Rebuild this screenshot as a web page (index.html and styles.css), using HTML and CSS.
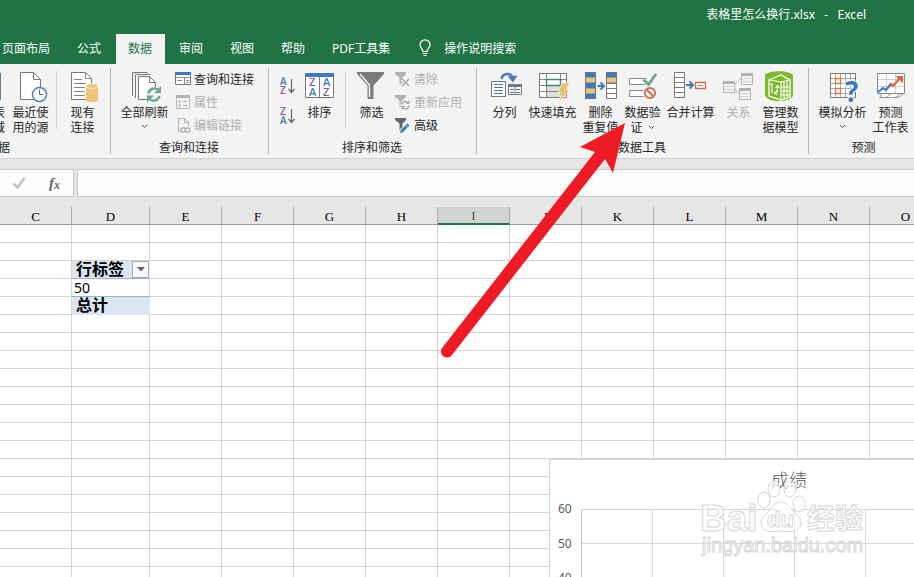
FILE: index.html
```html
<!DOCTYPE html>
<html lang="zh-CN">
<head>
<meta charset="utf-8">
<title>表格里怎么换行.xlsx - Excel</title>
<link rel="stylesheet" href="styles.css">
</head>
<body>
<header class="titlebar">
  <div class="doc-title">表格里怎么换行.xlsx&nbsp;&nbsp; -&nbsp;&nbsp; Excel</div>
  <nav class="tabs">
    <a class="tab tab-first" href="#">页面布局</a>
    <a class="tab" href="#">公式</a>
    <a class="tab active" href="#">数据</a>
    <a class="tab" href="#">审阅</a>
    <a class="tab" href="#">视图</a>
    <a class="tab" href="#">帮助</a>
    <a class="tab" href="#">PDF工具集</a>
    <a class="tab tell-me" href="#">
      <svg class="bulb" width="12" height="18" viewBox="0 0 12 18" fill="none" stroke="#fff" stroke-width="1.2"><path d="M4 12.5C4 10 1 9 1 5.8a5 5 0 0 1 10 0C11 9 8 10 8 12.5zM3.5 14.5h5M4.5 16.5h3"/></svg>
      操作说明搜索</a>
  </nav>
</header>

<main>
<div class="ribbon">
  <section class="group group-get">
    <div class="tools">
      <button class="big sliver"><svg width="2" height="34" viewBox="0 0 2 34"><path d="M0 2h1v4H0z" fill="#3d7ab8"/><path d="M.5 6v23" stroke="#777"/></svg><span>表<br>域</span></button>
      <button class="big"><svg width="37" height="34" viewBox="0 0 37 34"><path d="M8.500 1.500h13l7 7v20h-20z" fill="#fff" stroke="#777"/><path d="M21.500 1.500v7h7" fill="none" stroke="#777"/><circle cx="27.500" cy="23.500" r="7" fill="#fff" stroke="#4a7fb9" stroke-width="1.500"/><path d="M27.500 18.500v5h4" fill="none" stroke="#666"/></svg><span>最近使<br>用的源</span></button>
      <i class="rule"></i>
      <button class="big"><svg width="37" height="34" viewBox="0 0 37 34"><path d="M7.500 1.500h14l6 6v21h-20z" fill="#fff" stroke="#777"/><path d="M21.500 1.500v6h6M10 8.500h8M10 12.500h12M10 16.500h11M10 20.500h11M10 24.500h11" fill="none" stroke="#888"/><path d="M22 15v14c0 3 12 3 12 0V15z" fill="#edc67c"/><ellipse cx="28" cy="15" rx="6" ry="2.500" fill="#edc67c" stroke="#fff" stroke-width=".7"/></svg><span>现有<br>连接</span></button>
    </div>
    <h2 class="edge-label">据</h2>
  </section>

  <section class="group group-query">
    <div class="tools">
      <button class="big wide"><svg width="37" height="34" viewBox="0 0 37 34"><path d="M6.500 25V1.500h15M9.500 27V3.500h15" fill="none" stroke="#777"/><path d="M12.500 5.500h11l6 6v17h-17z" fill="#fff" stroke="#777"/><path d="M23.500 5.500v6h6" fill="none" stroke="#777"/><circle cx="28" cy="23.500" r="8" fill="#f3f3f3"/><path d="M22.500 22.500a6 6 0 0 1 10-3.500M33.500 25a6 6 0 0 1-10 3" fill="none" stroke="#6fa58f" stroke-width="2.400"/><path d="M35 15v7h-7zM21 31.500v-7h7z" fill="#6fa58f"/></svg><span>全部刷新</span><svg class="chevron" width="7" height="15" viewBox="0 0 7 15"><path d="M1 5l2.500 2.500L6 5" fill="none" stroke="#555"/></svg></button>
      <div class="stack">
        <button class="small"><svg width="16" height="16" viewBox="0 0 16 16"><path d="M.5 1.500h15v12H.5z" fill="#fff" stroke="#777"/><path d="M0 1h16v3H0z" fill="#3d7ab8"/><path d="M1 6.500h14M2 9.500h5M9.500 7v6M11 9.500h3M11 11.500h3" stroke="#888"/></svg>查询和连接</button>
        <button class="small" disabled><svg width="16" height="16" viewBox="0 0 16 16"><path d="M1.500 1.500h13v13h-13z" fill="#f5f2f6" stroke="#b8b4b8"/><path d="M1 1h14v3H1z" fill="#b5b1b6"/><circle cx="4.500" cy="7.500" r="1" fill="none" stroke="#aaa"/><circle cx="4.500" cy="11.500" r="1" fill="none" stroke="#aaa"/><path d="M8 7.500h4M8 11.500h4" stroke="#aaa"/></svg>属性</button>
        <button class="small" disabled><svg width="16" height="16" viewBox="0 0 16 16" fill="none" stroke="#b4b1b5"><path d="M5 14.500H3.500v-13h6l4 4V9M9.500 1.500v4h4"/><ellipse cx="8" cy="13" rx="2.500" ry="2" stroke-width="1.300"/><ellipse cx="12.500" cy="13" rx="2.500" ry="2" stroke-width="1.300"/></svg>编辑链接</button>
      </div>
    </div>
    <h2>查询和连接</h2>
  </section>

  <section class="group group-sort">
    <div class="tools">
      <div class="sort-pair">
        <button class="mini" aria-label="升序"><svg width="16" height="20" viewBox="0 0 16 20"><text class="glyph blue" x="0" y="9">A</text><text class="glyph purple" x="0" y="18">Z</text><path d="M11.500 3v13M8.500 13l3 3.500 3-3.500" fill="none" stroke="#666" stroke-width="1.200"/></svg></button>
        <button class="mini" aria-label="降序"><svg width="16" height="20" viewBox="0 0 16 20"><text class="glyph purple" x="0" y="9">Z</text><text class="glyph blue" x="0" y="18">A</text><path d="M11.500 3v13M8.500 13l3 3.500 3-3.500" fill="none" stroke="#666" stroke-width="1.200"/></svg></button>
      </div>
      <button class="big"><svg width="37" height="34" viewBox="0 0 37 34"><path d="M4.500 2.500h28v24h-28z" fill="#fff" stroke="#777"/><path d="M4 2h29v4H4z" fill="#3d7ab8"/><path d="M18.500 6v20" stroke="#777"/><g class="sort-letters"><text class="purple" x="8" y="15">Z</text><text class="blue" x="8" y="25">A</text><text class="blue" x="22" y="15">A</text><text class="purple" x="22" y="25">Z</text></g></svg><span>排序</span></button>
      <i class="rule"></i>
      <button class="big"><svg width="37" height="34" viewBox="0 0 37 34"><path d="M4 1h27v2L20.500 14.500V28h-6V14.500L4 3z" fill="#7b7b7b"/><path d="M7 3l9.500 11v12" fill="none" stroke="#fff" stroke-width="1.300"/></svg><span>筛选</span></button>
      <div class="stack">
        <button class="small" disabled><svg width="16" height="16" viewBox="0 0 16 16"><path d="M0 1h11v2L7.500 6.500V13h-3V6.500L0 3z" fill="#b4b1b5"/><path d="M7 8l7 7M14 8l-7 7" stroke="#f3f3f3" stroke-width="4"/><path d="M7 8l7 7M14 8l-7 7" stroke="#aaa" stroke-width="1.600"/></svg>清除</button>
        <button class="small" disabled><svg width="16" height="16" viewBox="0 0 16 16"><path d="M0 1h11v2L7.500 6.500V13h-3V6.500L0 3z" fill="#b4b1b5"/><circle cx="10.500" cy="11" r="5" fill="#f3f3f3"/><path d="M7 10.500a3.600 3.600 0 0 1 6-2M14 11.500a3.600 3.600 0 0 1-6 2.500" fill="none" stroke="#aaa" stroke-width="1.500"/><path d="M14.500 6v4h-4zM6.500 16v-4h4z" fill="#aaa"/></svg>重新应用</button>
        <button class="small"><svg width="16" height="16" viewBox="0 0 16 16"><path d="M0 1h11v2L7.500 6.500V13h-3V6.500L0 3z" fill="#666"/><path d="M6 15l8-8" stroke="#f3f3f3" stroke-width="5"/><path d="M7 14l6.500-6.500" stroke="#3d7ab8" stroke-width="3"/><path d="M5 16l.8-3.200 2.400 2.400z" fill="#3d7ab8"/><path d="M11 8.500l2 2" stroke="#fff" stroke-width=".7"/></svg>高级</button>
      </div>
    </div>
    <h2>排序和筛选</h2>
  </section>

  <section class="group group-data">
    <div class="tools">
      <button class="big"><svg width="37" height="34" viewBox="0 0 37 34"><path d="M5.500 10.500h14v15h-14zM22.500 13.500h13v10h-13z" fill="#fff" stroke="#777"/><path d="M22 13h14v3H22z" fill="#777"/><path d="M8 13.500h9M8 16.500h9M8 19.500h9M8 22.500h9M24 18.500h4M30 18.500h4M24 21.500h4M30 21.500h4" stroke="#3d7ab8"/><path d="M29 16v7" stroke="#777"/><path d="M15.500 8c1-6 9.500-7 11-1" fill="none" stroke="#4a80b8" stroke-width="2.500"/><path d="M21.500 5.500l5.500 6 4.500-7z" fill="#4a80b8"/></svg><span>分列</span></button>
      <button class="big wide"><svg width="37" height="34" viewBox="0 0 37 34"><path d="M5.500 2.500h27v24h-27z" fill="#fff" stroke="#777"/><path d="M12 15h14v11H12z" fill="#dedede"/><path d="M6 8.500h26M6 14.500h26M6 20.500h26M12.500 3v23M26.500 3v23" stroke="#888"/><path d="M12.500 8.500h14v6h-14z" fill="#fff" stroke="#3e8a6b" stroke-width="1.400"/><path d="M28 12h8l-4 7h4L24.500 31.500l3-9.500h-4z" fill="#edc172" stroke="#f3f3f3" stroke-width=".8"/></svg><span>快速填充</span></button>
      <button class="big"><svg width="37" height="34" viewBox="0 0 37 34"><path d="M3 1h11v27H3zM24 1h11v11H24z" fill="#3d7ab8"/><path d="M24 12h11v16H24z" fill="#fff"/><path d="M3 6.500h11v5H3zM3 17.500h11v5H3zM24 6.500h11v5H24z" fill="#edc67c"/><path d="M3.500 1.500h10v26h-10zM24.500 1.500h10v26h-10zM24 12.500h11M24 17.500h11M24 22.500h11" fill="none" stroke="#777"/><path d="M15.500 15h6M18.500 11.500L22 15l-3.500 3.500" fill="none" stroke="#3d7ab8" stroke-width="2"/></svg><span>删除<br>重复值</span></button>
      <button class="big"><svg width="37" height="34" viewBox="0 0 37 34"><path d="M5.500 7.500h17v6h-17zM5.500 19.500h17v6h-17z" fill="#fff" stroke="#888"/><path d="M20 9l4.500 4.500L32 3" fill="none" stroke="#f3f3f3" stroke-width="5"/><path d="M19.500 8.500l5 5L32 3" fill="none" stroke="#6fa58f" stroke-width="2.800"/><circle cx="26" cy="22" r="7" fill="#f3f3f3"/><circle cx="26" cy="22" r="5" fill="#fff" stroke="#d46a4b" stroke-width="2"/><path d="M22.500 18.500l7 7" stroke="#d46a4b" stroke-width="2"/></svg><span>数据验<br>证 <svg class="chevron inline" width="7" height="6" viewBox="0 0 7 6"><path d="M1 1l2.500 2.500L6 1" fill="none" stroke="#555"/></svg></span></button>
      <button class="big wide"><svg width="37" height="34" viewBox="0 0 37 34"><path d="M2.500 1.500h10v25h-10z" fill="#fff" stroke="#777"/><path d="M3 6.500h9M3 11.500h9M3 16.500h9M3 21.500h9" stroke="#777"/><path d="M14 14h6M17.500 10.500L21 14l-3.500 3.500" fill="none" stroke="#3d7ab8" stroke-width="2"/><path d="M23.500 11.500h10v6h-10z" fill="#fff" stroke="#d46a4b" stroke-width="1.300"/><path d="M25.500 14.500h6" stroke="#888"/></svg><span>合并计算</span></button>
      <button class="big" disabled><svg width="37" height="34" viewBox="0 0 37 34"><path d="M15 13l7-7M15 18l5 6" stroke="#b4b1b5"/><path d="M3.500 10.500h11v11h-11zM21.500 2.500h11v11h-11zM19.500 17.500h11v11h-11z" fill="#f7f3f8" stroke="#b4b1b5"/><path d="M3 10h12v3H3zM21 2h12v3H21zM19 17h12v3H19z" fill="#b4b1b5"/><path d="M5 15.500h8M5 18.500h8M23 7.500h8M23 10.500h8M21 22.500h8M21 25.500h8" stroke="#d0ccd1"/></svg><span>关系</span></button>
      <button class="big"><svg width="37" height="34" viewBox="0 0 37 34"><path d="M3 4C7-1 27-1 31 4v21c-2 3-7 5-14 5S5 28 3 25z" fill="#7cba2c"/><path d="M7 9l12-5 9 5v17l-9 3-12-4z" fill="#7cba2c" stroke="#fff" stroke-width="1.300"/><path d="M7 9l12 2 9-2M19 11v18M22 11v16M25 10v16M19 16h9M19 20h9M19 24h9" fill="none" stroke="#fff" stroke-width="1.200"/><path d="M8 13h3M10 13v9M12.500 22c3 0 3-1 3-7M13.500 17l2-2.500 2 2.500M15 20l-2.500 2 2.500 2" fill="none" stroke="#fff" stroke-width="1.200"/></svg><span>管理数<br>据模型</span></button>
    </div>
    <h2>数据工具</h2>
  </section>

  <section class="group group-forecast">
    <div class="tools">
      <button class="big wide"><svg width="37" height="34" viewBox="0 0 37 34"><path d="M6.500 2.500h25v24h-25z" fill="#fff" stroke="#777"/><path d="M11.500 3v23M16.500 3v23M21.500 3v23M26.500 3v23M7 7.500h24M7 12.500h24M7 17.500h24M7 22.500h24" stroke="#aaa"/><path d="M11.500 7.500h5v5h-5zM11.500 17.500h5v5h-5z" fill="#fff" stroke="#df7945" stroke-width="1.400"/><text class="question" x="21" y="31">?</text></svg><span>模拟分析</span><svg class="chevron" width="7" height="15" viewBox="0 0 7 15"><path d="M1 5l2.500 2.500L6 5" fill="none" stroke="#555"/></svg></button>
      <button class="big"><svg width="37" height="34" viewBox="0 0 37 34"><path d="M5.500 2.500h27v20c-3 0-4 4-8 4h-5c-3 0-1 0-5 0h-7c3-1 2-4-2-4z" fill="#fff" stroke="#888"/><path d="M6 8.500h26M6 15.500h26M14.500 3v19M23.500 3v19" stroke="#ccc"/><path d="M6 22.500h26M13 26.500c4 0 3-3 6-4M22 26.500c4 0 3-3 6-4" fill="none" stroke="#888"/><path d="M6 21l5-4 3 2 5-6" fill="none" stroke="#3d7ab8" stroke-width="2.200"/><path d="M18 12l3 3 8-9" fill="none" stroke="#d9623f" stroke-width="2.200"/><path d="M23.500 5H31v7.500z" fill="#d9623f"/></svg><span>预测<br>工作表</span></button>
    </div>
    <h2>预测</h2>
  </section>
</div>

<div class="formula-bar">
  <div class="formula-buttons">
    <button aria-label="输入"><svg width="14" height="14" viewBox="0 0 14 14"><path d="M1.500 7.500l4 4L12.500 2" fill="none" stroke="#c2c2c2" stroke-width="2.500"/></svg></button>
    <button class="fx" aria-label="插入函数">f<sub>x</sub></button>
  </div>
  <input class="formula-input" type="text" aria-label="编辑栏">
</div>

<div class="sheet">
  <table class="grid">
    <colgroup><col><col class="col-d"><col><col><col><col><col><col><col><col><col><col><col></colgroup>
    <thead><tr><th>C</th><th>D</th><th>E</th><th>F</th><th>G</th><th>H</th><th class="selected">I</th><th>J</th><th>K</th><th>L</th><th>M</th><th>N</th><th>O</th></tr></thead>
    <tbody>
      <tr><td><td><td><td><td><td><td><td><td><td><td><td><td></tr>
      <tr><td><td><td><td><td><td><td><td><td><td><td><td><td></tr>
      <tr><td><td class="pivot"><div class="pivot-head">行标签<button class="filter" aria-label="筛选行标签"><svg width="8" height="5" viewBox="0 0 8 5"><path d="M0 0h8L4 4.500z" fill="#666"/></svg></button></div><td><td><td><td><td><td><td><td><td><td><td></tr>
      <tr><td><td class="value">50<td><td><td><td><td><td><td><td><td><td><td></tr>
      <tr><td><td class="pivot total">总计<td><td><td><td><td><td><td><td><td><td><td></tr>
      <tr><td><td><td><td><td><td><td><td><td><td><td><td><td></tr>
      <tr><td><td><td><td><td><td><td><td><td><td><td><td><td></tr>
      <tr><td><td><td><td><td><td><td><td><td><td><td><td><td></tr>
      <tr><td><td><td><td><td><td><td><td><td><td><td><td><td></tr>
      <tr><td><td><td><td><td><td><td><td><td><td><td><td><td></tr>
      <tr><td><td><td><td><td><td><td><td><td><td><td><td><td></tr>
      <tr><td><td><td><td><td><td><td><td><td><td><td><td><td></tr>
      <tr><td><td><td><td><td><td><td><td><td><td><td><td><td></tr>
      <tr><td><td><td><td><td><td><td><td><td><td><td><td><td></tr>
      <tr><td><td><td><td><td><td><td><td><td><td><td><td><td></tr>
      <tr><td><td><td><td><td><td><td><td><td><td><td><td><td></tr>
      <tr><td><td><td><td><td><td><td><td><td><td><td><td><td></tr>
      <tr><td><td><td><td><td><td><td><td><td><td><td><td><td></tr>
      <tr><td><td><td><td><td><td><td><td><td><td><td><td><td></tr>
      <tr><td><td><td><td><td><td><td><td><td><td><td><td><td></tr>
    </tbody>
  </table>
  <svg class="chart" width="480" height="160" viewBox="0 0 480 160">
    <path d="M.5 .5h480v160H.5z" fill="#fff" stroke="#d4d4d4"/>
    <path d="M32 50.500h448M32 84.500h448M32 118.500h448M103.500 50v110M174.500 50v110M245.500 50v110M316.500 50v110" stroke="#d9d9d9"/>
    <path d="M32.500 50v110" stroke="#bfbfbf"/>
    <text class="chart-title" x="222" y="28">成绩</text>
    <g class="axis"><text x="9" y="54">60</text><text x="9" y="89">50</text><text x="9" y="123">40</text></g>
  </svg>
</div>
</main>

<svg class="watermark" width="170" height="84" viewBox="0 0 170 84">
  <g class="mark">
    <text class="latin" x="0" y="54">Bai</text>
    <text class="cjk" x="107" y="52">经验</text>
    <text class="url" x="2" y="75">jingyan.baidu.com</text>
    <ellipse cx="64" cy="23" rx="6" ry="8"/><ellipse cx="74" cy="12" rx="6" ry="8"/><ellipse cx="90" cy="12" rx="6" ry="8"/><ellipse cx="99" cy="27" rx="6" ry="8"/>
    <path d="M81 25c7 0 9 6 13 10s8 7 7 12c-1 6-6 9-20 7-14 2-19-1-20-7-1-5 3-8 7-12s6-10 13-10z"/>
    <text class="du" x="67" y="50">du</text>
  </g>
</svg>

<svg class="arrow" width="190" height="240" viewBox="0 0 190 240"><path d="M185 3L140 27l15 5L2 228a6 6 0 0 0 10 7L165 39l8 14z" fill="#ed1c24"/></svg>
</body>
</html>
```
FILE: styles.css
```css
* { box-sizing: border-box; }
html, body { height: 100%; }
body {
  position: relative;
  display: flex;
  flex-direction: column;
  margin: 0;
  overflow: hidden;
  background: #e6e6e6;
  color: #262626;
  font: 12px/15px "Noto Sans", "Noto Sans CJK SC", sans-serif;
}
button {
  margin: 0;
  padding: 0;
  border: 0;
  background: none;
  color: inherit;
  font: inherit;
}
button:disabled { color: #b1b1b1; }
svg { display: block; flex: none; }
main { display: flex; flex: 1; flex-direction: column; min-height: 0; }

/* Title bar and tabs */
.titlebar { background: #217346; color: #fff; }
.doc-title { height: 34px; padding: 7px 48px 0 0; text-align: right; }
.tabs { display: flex; gap: 2px; height: 30px; }
.tab {
  display: flex;
  align-items: center;
  padding: 0 13px 2px 12px;
  color: #fff;
  text-decoration: none;
  white-space: nowrap;
}
.tab-first { padding-left: 2px; }
.active { background: #f3f3f3; color: #217346; }
.tell-me { gap: 13px; padding-left: 14px; }

/* Ribbon */
.ribbon {
  display: flex;
  flex: none;
  height: 95px;
  overflow: hidden;
  border-bottom: 1px solid #d2d2d2;
  background: #f3f3f3;
}
.group {
  position: relative;
  display: flex;
  flex: none;
  flex-direction: column;
}
.group::after {
  content: "";
  position: absolute;
  top: 4px;
  right: 0;
  width: 1px;
  height: 86px;
  background: #b4b4b4;
}
.group-get { width: 111px; }
.group-query { width: 158px; }
.group-sort { width: 208px; }
.group-data { width: 332px; }
.group-forecast { width: 111px; }
.tools {
  display: flex;
  gap: 1px;
  height: 76px;
  padding: 7px 0 0 7px;
}
.group-get .tools { padding-left: 0; }
.group h2 {
  margin: 0;
  padding-right: 2px;
  font-size: 12px;
  font-weight: 400;
  line-height: 15px;
  text-align: center;
}
.group .edge-label { margin-left: -2px; text-align: left; }
.big {
  display: flex;
  flex: none;
  flex-direction: column;
  align-items: center;
  width: 41px;
  white-space: nowrap;
}
.wide { width: 53px; }
.sliver { align-items: flex-start; width: 9px; }
.sliver span { margin-left: -7px; }
.inline { display: inline-block; margin-left: 2px; vertical-align: 1px; }
.rule { width: 1px; height: 58px; margin: 0 4px; background: #d4d4d4; }
.stack { display: flex; flex-direction: column; margin-left: 3px; }
.small {
  display: flex;
  align-items: center;
  gap: 3px;
  height: 23px;
  padding-bottom: 7px;
  white-space: nowrap;
}
.group-sort .stack { margin-left: 2px; }
.sort-pair {
  display: flex;
  flex-direction: column;
  gap: 10px;
  width: 22px;
  padding: 5px 0 0 4px;
}
.glyph { font: 600 10px "Open Sans", sans-serif; }
.sort-letters { font: 600 11px "Open Sans", sans-serif; }
.blue { fill: #3d7ab8; }
.purple { fill: #8951a5; }
.question {
  fill: #3d7ab8;
  stroke: #fff;
  stroke-width: 2px;
  paint-order: stroke;
  font: 700 28px "Open Sans", sans-serif;
}

/* Formula bar */
.formula-bar { display: flex; flex: none; gap: 3px; height: 48px; padding: 10px 0; }
.formula-buttons {
  display: flex;
  align-items: center;
  gap: 23px;
  width: 74px;
  padding-left: 12px;
  border: 1px solid #c6c6c6;
  border-left: 0;
  background: #fdfdfd;
}
.fx { color: #666; font: italic 700 15px/18px "Liberation Serif", serif; }
.fx sub { font-size: 12px; line-height: 1px; vertical-align: -1px; }
.formula-input {
  flex: 1;
  min-width: 0;
  border: 1px solid #c6c6c6;
  border-right: 0;
  background: #fdfdfd;
}

/* Worksheet */
.sheet { position: relative; flex: 1; overflow: hidden; }
.grid {
  width: 942px;
  border-collapse: separate;
  border-spacing: 0;
  table-layout: fixed;
  background: #fff;
}
.col-d { width: 78px; }
.grid th, .grid td {
  height: 18px;
  padding: 0;
  border: 0 solid #d4d4d4;
  border-width: 0 1px 1px 0;
  line-height: 17px;
}
.grid th {
  padding-top: 2px;
  border-color: #ababab;
  border-bottom-color: #999;
  background: #e6e6e6;
  color: #000;
  font: 13px/15px "Liberation Serif", serif;
}
.grid .selected {
  border-bottom: 2px solid #217346;
  background: #d2d2d2;
  color: #217346;
  line-height: 14px;
}
.grid .pivot {
  padding-left: 4px;
  border-color: #dce6f1;
  border-bottom-color: #95b3d7;
  background: #dce6f1;
  color: #000;
  font-size: 16px;
  font-weight: 700;
}
.grid .total { border-bottom-color: #dce6f1; }
.grid .value {
  padding-left: 2px;
  border-bottom-color: #95b3d7;
  color: #000;
  font-size: 14px;
}
.pivot-head { display: flex; justify-content: space-between; height: 17px; }
.filter {
  display: flex;
  align-items: center;
  justify-content: center;
  width: 17px;
  height: 17px;
  border: 1px solid #ababab;
  background: #f7f9fb;
}
.chart { position: absolute; top: 252px; left: 549px; }
.chart-title { fill: #595959; font: 300 18px "Noto Sans CJK SC", sans-serif; }
.axis { fill: #595959; font-size: 12px; }

/* Overlays */
.arrow, .watermark { position: absolute; pointer-events: none; }
.arrow { top: 120px; left: 440px; }
.watermark { top: 477px; left: 700px; }
.mark { fill: #fff; fill-opacity: .6; stroke: #d6d6d6; stroke-width: 1; }
.latin { font: 700 37px "Liberation Sans", sans-serif; }
.cjk { font: 700 28px "Noto Sans CJK SC", sans-serif; }
.url { font: 400 20px "Liberation Sans", sans-serif; }
.du { font: 700 22px "Liberation Sans", sans-serif; }
```
